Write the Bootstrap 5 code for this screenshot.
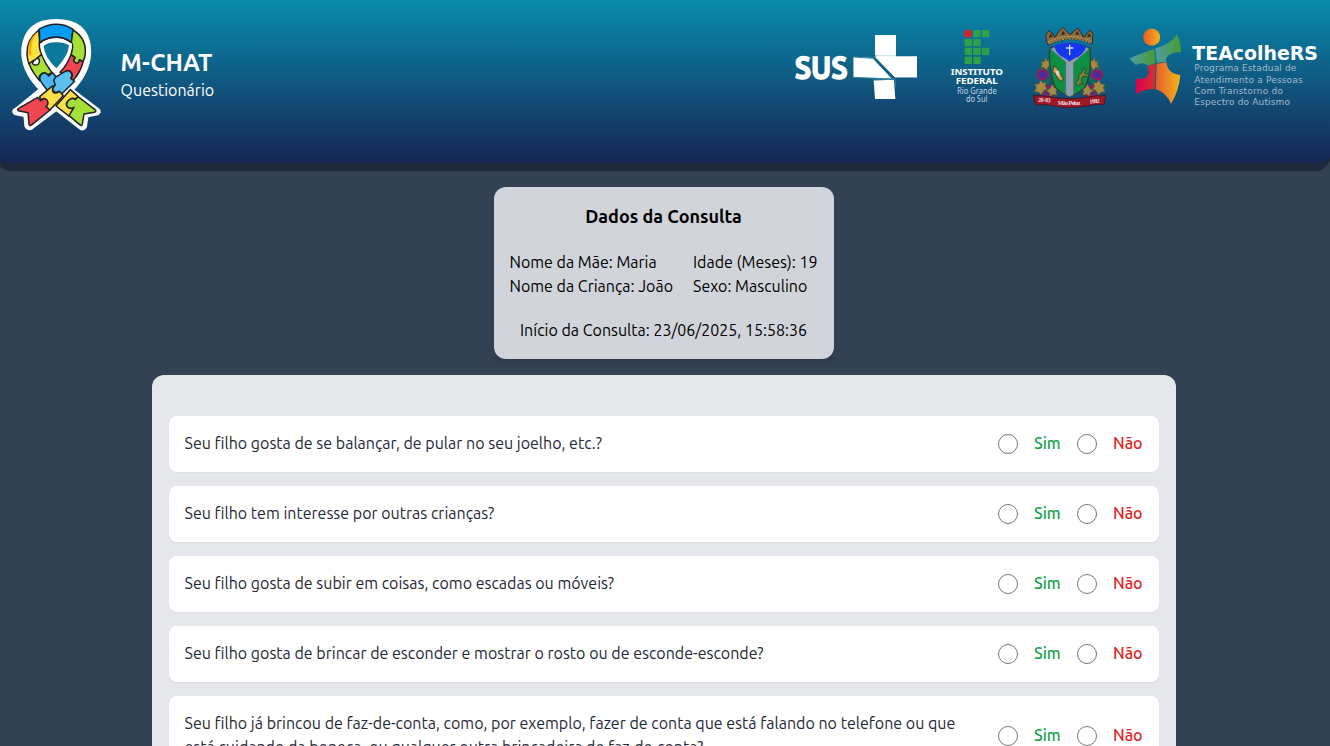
<!DOCTYPE html>
<html lang="pt-BR">
<head>
<meta charset="utf-8">
<meta name="viewport" content="width=device-width, initial-scale=1">
<title>M-CHAT</title>
<link href="https://cdn.jsdelivr.net/npm/bootstrap@5.3.0/dist/css/bootstrap.min.css" rel="stylesheet">
<style>
html{overflow:hidden}
body{background:#334155;font-family:Ubuntu,"Noto Sans",sans-serif;font-size:16px;line-height:24px;color:#000;height:746px;overflow:hidden}
.topbar{height:171px;margin:0 -1px 0 -5px;padding-left:15px;border-bottom:8px solid #1e293b;border-radius:0 0 16px 16px;background:linear-gradient(#088bad,#172554)}
.ribbon{width:92px;height:114px;margin-top:18px}
.brand{margin:47px 0 0 18.6px;color:#fff;white-space:nowrap}
.brand h1{font-size:24px;line-height:31px;font-weight:600;margin:0}
.logos{margin-top:20px;margin-right:1px}
.inst{font-family:"Noto Sans","Open Sans",sans-serif}
.page-col{width:1328px}
.info{width:340px;height:172px;background:#d1d5db;border-radius:12px;padding:15px 16.5px 16px 15.5px;box-shadow:0 4px 6px -1px #0002;white-space:nowrap}
.info h2{font-size:18px;line-height:28px;font-weight:600;margin:0 0 20px}
.mother{width:183.5px}
.panel{width:1024px;background:#e5e7eb;border-radius:12px;padding:41px 17px}
.question{background:#fff;border-radius:8px;padding:15px 17px 17px 15.5px;margin-bottom:14px;color:#1f2937;box-shadow:0 1px 2px #0000000d}
.question p{width:790px}
.question .form-check-input{width:20px;height:20px;margin:2px 0 0;border:1px solid #767676}
.question label{font-weight:500;white-space:nowrap}
.sim{width:27px;color:#16a34a}
.nao{width:29px;color:#dc2626}
</style>
</head>
<body>
<header class="topbar d-flex align-items-start">
<svg class="ribbon" viewBox="30 24 276 342">
<path d="M49 300 125 238Q66 180 71 115Q80 34 168 34Q258 34 266 112Q272 180 213 240L294 302Q297 306 292 309L259 316 254 349Q249 357 243 353L169 295 95 351Q85 358 80 347L77 315 45 308Q40 304 49 300Z" fill="#fff" stroke="#fff" stroke-width="14" stroke-linejoin="round"/>
<g stroke="#202126" stroke-width="4.500" stroke-linejoin="round">
<path d="M116 60Q79 90 81 132Q83 154 87 161L98 155 125 134Q115 112 119 91Z" fill="#fde33c"/>
<path d="M87 161 101 151Q93 164 105 165Q120 167 118 148L111 144 125 134Q135 161 156 188L143 194Q132 184 123 193Q114 200 120 213Q99 190 87 161Z" fill="#a6df35"/>
<path d="M121 212Q116 198 127 191Q137 184 146 198L156 188 195 225 172 260 140 238Q132 230 121 212Z" fill="#4bb9ef"/>
<path d="M118 57Q143 43 168 43Q197 43 219 58L214 98Q194 82 169 82Q139 82 119 99Z" fill="#079cf0"/>
<path d="M219 60Q259 84 256 130Q255 143 249 155L238 149Q239 163 226 158Q216 153 226 143L213 134Q222 105 214 97Z" fill="#a6df35"/>
<path d="M213 134 225 143Q216 154 226 158Q238 162 238 149L249 156Q242 187 218 212L213 205Q221 194 212 185Q202 177 190 190L180 187Q200 167 213 134Z" fill="#ef4652"/>
<path d="M168 288 211 239 234 259 226 269Q220 260 207 270Q193 280 203 291Q211 298 221 292L208 319Z" fill="#fde047"/>
<path d="M234 260 285 299Q291 303 283 307L252 312 247 342Q246 350 239 344L207 317 222 292Q210 299 202 290Q196 280 207 270Q220 261 226 269Z" fill="#a6df35"/>
<path d="M166 202 189 188Q205 177 213 188Q219 197 212 205L224 214 184 253 177 244Q165 251 159 241Q155 230 166 225L161 211Z" fill="#5bc0ee"/>
<path d="M119 260 156 229 163 228Q153 239 161 248Q168 252 178 244L190 257 149 301 137 291Q147 281 138 269Q130 261 124 271Z" fill="#fde047"/>
<path d="M55 296 113 262 122 272Q134 260 142 272Q147 282 138 290L150 300 96 344Q88 350 87 342L84 308 55 302Q50 299 55 296Z" fill="#ef4652"/>
<path d="M122 101Q144 86 169 86Q193 86 215 100Q216 142 169 190Q119 143 122 101Z" fill="#fff" stroke="none"/>
<path d="M131 107Q148 96 169 97Q191 96 207 106Q205 138 169 175Q132 139 131 107Z" fill="#0c789b" stroke="none"/>
<path d="M119 99Q140 82 169 82Q195 82 214 98" fill="none"/>
</g>
<path d="M108 69Q79 94 85 135Q91 139 94 133 90 98 110 70Z" fill="#f9ac12"/>
</svg>
<div class="brand me-auto"><h1>M-CHAT</h1><span>Questionário</span></div>
<div class="logos d-flex">
<svg width="145" height="95" viewBox="0 0 435 285" fill="#fff">
<text x="29" y="176" font-family="Ubuntu" font-weight="700" font-size="92" stroke="#fff" stroke-width="4" textLength="159" lengthAdjust="spacingAndGlyphs">SUS</text>
<path d="M270 45H333V111H396V172H330L272 111V105H270ZM206 111 263 114 321 176 206 172ZM266 181 323 179H327L331 237H270Z"/>
<path d="M206 111 262 114 320 175 206 172ZM268 109H396V172H330Z"/>
<path d="M206 111 264 115 322 177 206 172M264 115 274 108M320 176 331 178V200M264 180 322 178" fill="none" stroke="#3580a6" stroke-width="3"/>
<path d="M270 107H333" stroke="#a7cddc" stroke-width="2"/>
</svg>
<svg class="inst" width="90" height="95" viewBox="435 0 270 285">
<circle cx="549" cy="41" r="12.500" fill="#cf2329"/>
<path d="M565 30h22v22h-22zM591 30h22v22h-22zM539 57h22v22h-22zM565 57h22v22h-22zM539 83h22v22h-22zM565 83h22v22h-22zM591 83h22v22h-22zM539 110h22v22h-22zM565 110h22v22h-22z" fill="#31a149"/>
<g fill="#fff" font-weight="700" font-size="28"><text x="497" y="166" textLength="157" lengthAdjust="spacingAndGlyphs">INSTITUTO</text><text x="512" y="193" textLength="126" lengthAdjust="spacingAndGlyphs">FEDERAL</text></g>
<g fill="#c3d2e0" font-size="24"><text x="516" y="221" textLength="119" lengthAdjust="spacingAndGlyphs">Rio Grande</text><text x="543" y="247" textLength="64" lengthAdjust="spacingAndGlyphs">do Sul</text></g>
</svg>
<svg width="100" height="95" viewBox="0 0 300 285">
<defs><g id="leafs"><path d="M58 150l20 2 6 14-4 8-20 5-9-14zM82 197l21 8-3 20-17 5-9-8z" fill="#4d2a9c" stroke="#a01c4e" stroke-width="5"/><path d="M45 200l14-6M88 175l-8 14M56 146l10-10M84 150l-6-12" stroke="#146f43" stroke-width="8"/><path d="M75 112l6 10 9-2-3 10 7 5-9 5-5 11-8-8-10-1 5-9-3-9 9 1zM62 180l7 9 10-3-3 13 6 8-11 5-7 13-8-8-13-2 6-12-5-10 12-1zM97 193l7 10 9 2-5 9 3 12-12-3-9 7-2-12-10-6 11-6z" fill="#a28a45" stroke="#5d522e" stroke-width="2"/></g></defs>
<use href="#leafs"/><use href="#leafs" transform="translate(299 0) scale(-1 1)"/>
<path d="M89 84Q151 61 210 84Q216 167 193 203Q178 221 149 230Q120 218 106 202Q86 161 89 84Z" fill="#0b8f43" stroke="#313e39" stroke-width="4"/>
<path d="M92 88 104 80 149 124 198 80 207 88 161 128V224L149 230 137 224V126Z" fill="#8d9eae" stroke="#4e6873" stroke-width="2"/>
<path d="M106 76Q150 60 200 78Q189 108 165 114L149 124 133 114Q112 106 103 81Z" fill="#1736ef"/>
<path d="M149 74V106M138 84H160" stroke="#d9dceb" stroke-width="4"/>
<path d="M101 138l12 7-2 8 11 11 8 11-5 10-12-9-7-15-8-4z" fill="#c29b54" stroke="#34431e" stroke-width="3"/><path d="M106 149l11 4 3 18-11-6z" fill="#f1c5c0"/>
<path d="M166 192l10-14 1-15 9-5 5-14 6 3-3 12 12 6-4 5-13-1-6 12 6 13-8-4-7 7z" fill="#76843a" stroke="#344f23" stroke-width="3"/>
<path d="M81 68 77 45 88 32 98 42 105 52 117 34 129 22 141 35 150 44 162 34 172 24 183 38 191 53 203 39 210 30 219 43 216 72Q150 38 85 75Z" fill="#8c6b3e" stroke="#2b2520" stroke-width="3"/>
<path d="M83 66Q150 34 216 64M88 72Q150 42 213 70" fill="none" stroke="#c59f5a" stroke-width="3" stroke-dasharray="7 3"/>
<path d="M92 40l6 10-12 3zM129 32l7 10-13 3zM172 34l6 10-13-1zM208 40l6 10-13 0z" fill="#32231d"/>
<path d="M40 227Q69 225 105 233Q150 240 194 233Q229 225 257 227L253 253Q229 252 197 258Q149 268 103 258Q73 251 47 255Z" fill="#9d1725" stroke="#4b1425" stroke-width="3"/>
<g fill="#f0dfe0" font-family="Liberation Serif" font-weight="700" font-size="18"><text x="54" y="246" textLength="38" transform="rotate(3 70 240)">20-03</text><text x="113" y="254" textLength="68">Mão Peluz</text><text x="208" y="249" textLength="31" transform="rotate(-4 225 240)">1992</text></g>
</svg>
<svg width="210" height="95" viewBox="0 0 630 285">
<defs><linearGradient id="ga"><stop stop-color="#e85b2b"/><stop offset="1" stop-color="#f2b51b"/></linearGradient><linearGradient id="gb"><stop stop-color="#4e9cab"/><stop offset="1" stop-color="#4b9a2c"/></linearGradient><linearGradient id="gc"><stop stop-color="#dc0057"/><stop offset="1" stop-color="#d33229"/></linearGradient></defs>
<circle cx="95" cy="52" r="25.500" fill="url(#ga)"/>
<path d="M28 115Q65 99 103 87L107 129 83 137Q68 124 48 135Q38 127 28 115Z" fill="url(#gb)"/><path d="M106 85Q154 72 171 43Q182 66 183 97Q160 95 146 106 135 114 139 125L110 128Z" fill="url(#gb)"/>
<path d="M84 137 107 132 104 207Q75 206 48 222L48 176Q80 182 86 158Z" fill="url(#gc)"/><path d="M110 131 139 127Q142 161 181 165Q177 213 153 251Q140 218 107 207Z" fill="url(#ga)"/>
<text x="217" y="119" fill="#fff" font-family="DejaVu Sans" font-weight="700" font-size="56" textLength="377" lengthAdjust="spacingAndGlyphs">TEAcolheRS</text>
<g fill="#a3b9cb" font-family="DejaVu Sans" font-size="27"><text x="223" y="153" textLength="306">Programa Estadual de</text><text x="223" y="188" textLength="325">Atendimento a Pessoas</text><text x="223" y="221" textLength="266">Com Transtorno do</text><text x="223" y="254" textLength="287">Espectro do Autismo</text></g>
</svg>
</div>
</header>
<main class="page-col d-flex flex-column align-items-center gap-3 pt-3">
<section class="info text-center">
<h2>Dados da Consulta</h2>
<div class="d-flex text-start mb-3 pb-1">
<div class="mother"><div>Nome da Mãe: Maria</div><div>Nome da Criança: João</div></div>
<div><div>Idade (Meses): 19</div><div>Sexo: Masculino</div></div>
</div>
<div>Início da Consulta: 23/06/2025, 15:58:36</div>
</section>
<section class="panel">
<div class="question d-flex align-items-center gap-3"><p class="mb-0 me-auto">Seu filho gosta de se balançar, de pular no seu joelho, etc.?</p><input class="form-check-input" type="radio" name="q1" id="q1s"><label class="sim" for="q1s">Sim</label><input class="form-check-input" type="radio" name="q1" id="q1n"><label class="nao" for="q1n">Não</label></div>
<div class="question d-flex align-items-center gap-3"><p class="mb-0 me-auto">Seu filho tem interesse por outras crianças?</p><input class="form-check-input" type="radio" name="q2" id="q2s"><label class="sim" for="q2s">Sim</label><input class="form-check-input" type="radio" name="q2" id="q2n"><label class="nao" for="q2n">Não</label></div>
<div class="question d-flex align-items-center gap-3"><p class="mb-0 me-auto">Seu filho gosta de subir em coisas, como escadas ou móveis?</p><input class="form-check-input" type="radio" name="q3" id="q3s"><label class="sim" for="q3s">Sim</label><input class="form-check-input" type="radio" name="q3" id="q3n"><label class="nao" for="q3n">Não</label></div>
<div class="question d-flex align-items-center gap-3"><p class="mb-0 me-auto">Seu filho gosta de brincar de esconder e mostrar o rosto ou de esconde-esconde?</p><input class="form-check-input" type="radio" name="q4" id="q4s"><label class="sim" for="q4s">Sim</label><input class="form-check-input" type="radio" name="q4" id="q4n"><label class="nao" for="q4n">Não</label></div>
<div class="question d-flex align-items-center gap-3"><p class="mb-0 me-auto">Seu filho já brincou de faz-de-conta, como, por exemplo, fazer de conta que está falando no telefone ou que está cuidando da boneca, ou qualquer outra brincadeira de faz-de-conta?</p><input class="form-check-input" type="radio" name="q5" id="q5s"><label class="sim" for="q5s">Sim</label><input class="form-check-input" type="radio" name="q5" id="q5n"><label class="nao" for="q5n">Não</label></div>
</section>
</main>
<script src="https://cdn.jsdelivr.net/npm/bootstrap@5.3.0/dist/js/bootstrap.bundle.min.js"></script>
</body>
</html>
